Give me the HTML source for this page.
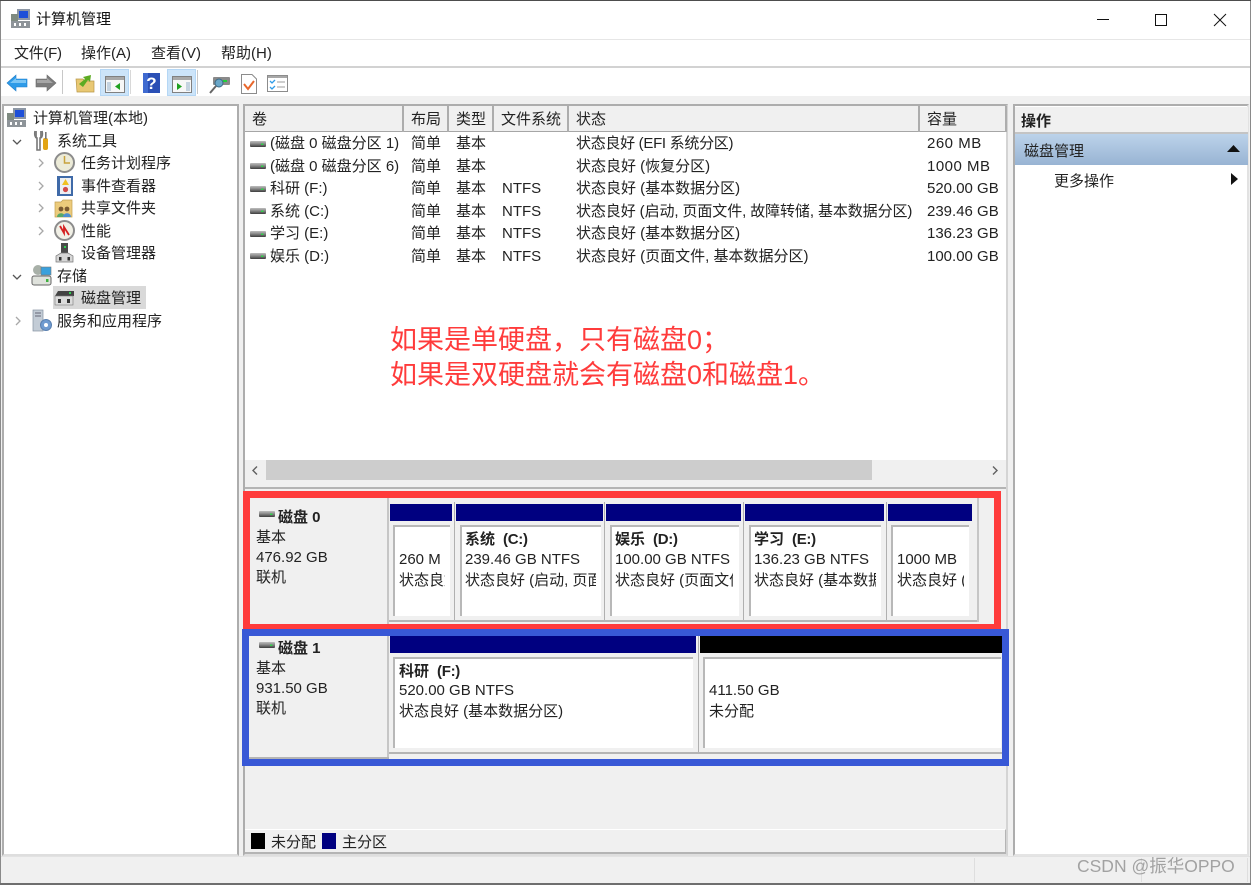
<!DOCTYPE html>
<html><head><meta charset="utf-8"><style>
html,body{margin:0;padding:0;width:1251px;height:885px;overflow:hidden;background:#f0f0f0}
body{position:relative;font-family:"Liberation Sans","Noto Sans CJK SC",sans-serif;font-size:15px;color:#222}
.t{position:absolute;white-space:nowrap;line-height:20px;height:20px}
.b{font-weight:bold}
.b span{margin-left:8px;letter-spacing:-.3px}
.r{position:absolute}
.c{overflow:hidden}
.v{position:absolute;background:#fff;border-top:2px solid #b8b8b8;border-left:2px solid #b8b8b8;box-sizing:border-box}
svg{position:absolute;overflow:visible}
</style></head><body>
<svg width="0" height="0" style="position:absolute"><defs>
<linearGradient id="dg" x1="0" y1="0" x2="0" y2="1"><stop offset="0" stop-color="#bdbdbd"/><stop offset=".45" stop-color="#8a8a8a"/><stop offset="1" stop-color="#3c3c3c"/></linearGradient>
<symbol id="disk" viewBox="0 0 16 8"><rect x="0" y="1" width="16" height="6" rx="1" fill="url(#dg)"/><rect x="11" y="3.5" width="2.5" height="1.5" fill="#2fd04a"/></symbol>
<symbol id="pc" viewBox="0 0 20 20"><rect x="6" y="0" width="13" height="11" fill="#8d97a5"/><rect x="8" y="2" width="9" height="7" fill="#1d4fd8"/><rect x="0" y="5" width="7" height="8" fill="#7e8a80"/><rect x="0" y="12" width="19" height="7" fill="#8e9499"/><rect x="3" y="14" width="2" height="3" fill="#fff"/><rect x="8" y="14" width="2" height="3" fill="#fff"/><rect x="13" y="14" width="2" height="3" fill="#fff"/></symbol>
<symbol id="chD" viewBox="0 0 10 6"><path d="M1 1L5 5L9 1" fill="none" stroke="#555" stroke-width="1.3"/></symbol>
<symbol id="chR" viewBox="0 0 6 10"><path d="M1 1L5 5L1 9" fill="none" stroke="#a8a8a8" stroke-width="1.3"/></symbol>
</defs></svg>

<!-- window frame / title -->
<div class="r" style="left:0;top:0;width:1251px;height:1px;background:#4d4d4d"></div>
<div class="r" style="left:1px;top:1px;width:1249px;height:38px;background:#fff"></div>
<div class="r" style="left:1px;top:39px;width:1249px;height:1px;background:#e6e6e6"></div>
<div class="r" style="left:1px;top:40px;width:1249px;height:26px;background:#fff"></div>
<div class="r" style="left:1px;top:66px;width:1249px;height:2px;background:#d2d2d2"></div>
<div class="r" style="left:1px;top:68px;width:1249px;height:28px;background:#fff"></div>
<div class="r" style="left:0;top:1px;width:1px;height:884px;background:#8a8a8a"></div>
<div class="r" style="left:1250px;top:1px;width:1px;height:884px;background:#8a8a8a"></div>
<svg style="left:11px;top:9px" width="20" height="20"><use href="#pc" width="20" height="20"/></svg>
<div class="t" style="left:36px;top:10px;color:#111">计算机管理</div>
<svg style="left:1097px;top:19px" width="12" height="2"><rect width="12" height="1" fill="#111"/></svg>
<svg style="left:1155px;top:14px" width="12" height="12"><rect x=".5" y=".5" width="11" height="11" fill="none" stroke="#111"/></svg>
<svg style="left:1214px;top:14px" width="12" height="12"><path d="M0 0L12 12M12 0L0 12" stroke="#111" fill="none"/></svg>

<!-- menu -->
<div class="t" style="left:14px;top:44px;letter-spacing:-.3px">文件(F)</div>
<div class="t" style="left:81px;top:44px">操作(A)</div>
<div class="t" style="left:151px;top:44px">查看(V)</div>
<div class="t" style="left:221px;top:44px">帮助(H)</div>

<!-- toolbar -->
<div class="r" style="left:100px;top:69px;width:29px;height:27px;background:#cce4f9;box-sizing:border-box;border:1px solid #b5d7f5"></div>
<div class="r" style="left:167px;top:69px;width:29px;height:27px;background:#cce4f9;box-sizing:border-box;border:1px solid #b5d7f5"></div>
<div class="r" style="left:62px;top:70px;width:1px;height:24px;background:#c8c8c8"></div>
<div class="r" style="left:130px;top:70px;width:1px;height:24px;background:#d8d8d8"></div>
<div class="r" style="left:197px;top:70px;width:1px;height:24px;background:#c8c8c8"></div>
<svg style="left:7px;top:74px" width="20" height="18"><path d="M0 9L9 1V5H20V13H9V17Z" fill="#2e9be8" stroke="#1f7fcc" stroke-width=".6"/><path d="M3 9L9 4V6H19V9Z" fill="#7cc6f5"/></svg>
<svg style="left:36px;top:74px" width="20" height="18"><path d="M20 9L11 1V5H0V13H11V17Z" fill="#7d7d7d" stroke="#6b6b6b" stroke-width=".6"/><path d="M1 6H11V4L17 9H1Z" fill="#a6a6a6"/></svg>
<svg style="left:76px;top:74px" width="19" height="19"><path d="M0 5H7L9 7H18V18H1Z" fill="#e9c873" stroke="#b8974a" stroke-width=".7"/><path d="M3 10L9 5L7 3L15 1L14 8L12 6L7 13Z" fill="#5dab22"/></svg>
<svg style="left:105px;top:76px" width="20" height="17"><rect x=".5" y=".5" width="19" height="16" fill="#f7f7f7" stroke="#808080"/><rect x="1" y="1" width="18" height="3" fill="#a8a8a8"/><rect x="2" y="6" width="4" height="9" fill="#c5d3e0"/><path d="M15 7V14L10 10.5Z" fill="#1fa01f"/></svg>
<svg style="left:143px;top:73px" width="17" height="20"><rect width="17" height="20" fill="#2a4fb5"/><rect x="0" y="0" width="5" height="20" fill="#3f6ad0"/><text x="8.5" y="16" text-anchor="middle" font-family="Liberation Sans" font-weight="bold" font-size="17" fill="#fff">?</text></svg>
<svg style="left:172px;top:76px" width="20" height="17"><rect x=".5" y=".5" width="19" height="16" fill="#f7f7f7" stroke="#808080"/><rect x="1" y="1" width="18" height="3" fill="#a8a8a8"/><rect x="14" y="6" width="4" height="9" fill="#c5d3e0"/><path d="M5 7V14L10 10.5Z" fill="#1fa01f"/></svg>
<svg style="left:210px;top:76px" width="20" height="19"><rect x="3" y="1" width="17" height="8" rx="1" fill="#8a8a8a"/><rect x="13" y="4" width="4" height="2" fill="#1fd03a"/><circle cx="9" cy="7" r="4" fill="#6aa7c8" stroke="#3d6a86"/><path d="M6 10L0 17" stroke="#666" stroke-width="2"/></svg>
<svg style="left:241px;top:74px" width="16" height="20"><path d="M.5.5H11L15.5 5V19.5H.5Z" fill="#fff" stroke="#8c8c8c"/><path d="M3 10L7 15L13 7" fill="none" stroke="#e8672c" stroke-width="2"/></svg>
<svg style="left:267px;top:75px" width="21" height="17"><rect x=".5" y=".5" width="20" height="16" fill="#fff" stroke="#8c8c8c"/><rect x="1" y="1" width="19" height="2" fill="#a8a8a8"/><path d="M3 6L5 8L8 5M3 12L5 14L8 11" fill="none" stroke="#2e9be8" stroke-width="1.3"/><path d="M10 7H18M10 12H18" stroke="#bdbdbd" stroke-width="1.5"/></svg>

<!-- left pane -->
<div class="r" style="left:2px;top:104px;width:237px;height:752px;box-sizing:border-box;background:#fff;border:2px solid #adadad;border-bottom-color:#dedede"></div>
<svg style="left:7px;top:108px" width="20" height="20"><use href="#pc" width="20" height="20"/></svg>
<div class="t" style="left:33px;top:109px">计算机管理(本地)</div>

<svg style="left:12px;top:139px" width="10" height="6"><use href="#chD" width="10" height="6"/></svg>
<svg style="left:33px;top:130px" width="16" height="21"><path d="M3 1V8M8 1V8" stroke="#888" stroke-width="2"/><path d="M2 1C1 6 3 8 4 8V20H7V8C9 8 10 5 9 1" fill="none" stroke="#777" stroke-width="1.6"/><rect x="10" y="8" width="5" height="12" rx="2" fill="#e2a414"/><rect x="12" y="2" width="1.6" height="7" fill="#777"/></svg>
<div class="t" style="left:57px;top:132px">系统工具</div>

<svg style="left:38px;top:158px" width="6" height="10"><use href="#chR" width="6" height="10"/></svg>
<svg style="left:54px;top:152px" width="21" height="21"><circle cx="10.5" cy="10.5" r="9.5" fill="#ecebd8" stroke="#8c8c8c" stroke-width="2"/><path d="M10.5 4V11H16" fill="none" stroke="#c7a23c" stroke-width="1.5"/></svg>
<div class="t" style="left:81px;top:154px">任务计划程序</div>

<svg style="left:38px;top:181px" width="6" height="10"><use href="#chR" width="6" height="10"/></svg>
<svg style="left:56px;top:176px" width="18" height="20"><rect x="1" y="0" width="16" height="20" fill="#3f6aa8"/><rect x="4" y="2" width="11" height="16" fill="#eceef2"/><path d="M9.5 3L13 9H6Z" fill="#f0c020"/><circle cx="9.5" cy="13.5" r="2.6" fill="#d04a4a"/></svg>
<div class="t" style="left:81px;top:177px">事件查看器</div>

<svg style="left:38px;top:203px" width="6" height="10"><use href="#chR" width="6" height="10"/></svg>
<svg style="left:55px;top:199px" width="18" height="19"><path d="M0 3H6L8 1H17V18H0Z" fill="#eccb7c" stroke="#c2a04f" stroke-width=".7"/><circle cx="6" cy="10" r="2.4" fill="#7a5a32"/><circle cx="12" cy="10" r="2.4" fill="#7a5a32"/><path d="M2 18C2 13 10 13 10 18Z" fill="#58a868"/><path d="M8 18C8 13 16 13 16 18Z" fill="#4f8fd0"/></svg>
<div class="t" style="left:81px;top:199px">共享文件夹</div>

<svg style="left:38px;top:226px" width="6" height="10"><use href="#chR" width="6" height="10"/></svg>
<svg style="left:54px;top:220px" width="21" height="21"><circle cx="10.5" cy="10.5" r="9.5" fill="#f1f0e6" stroke="#8c8c8c" stroke-width="2"/><path d="M6 6L10 13L10 7L15 15" fill="none" stroke="#d42020" stroke-width="1.8"/></svg>
<div class="t" style="left:81px;top:222px">性能</div>

<svg style="left:56px;top:243px" width="17" height="20"><rect x="5" y="0" width="7" height="11" fill="#4a4a4a"/><rect x="8" y="3" width="2" height="2" fill="#30d050"/><path d="M0 19V13L5 10H12L17 13V19Z" fill="#d6d6d6" stroke="#777" stroke-width=".7"/><rect x="3" y="14" width="2.5" height="3.5" fill="#333"/><rect x="11.5" y="14" width="2.5" height="3.5" fill="#333"/></svg>
<div class="t" style="left:81px;top:244px">设备管理器</div>

<svg style="left:12px;top:274px" width="10" height="6"><use href="#chD" width="10" height="6"/></svg>
<svg style="left:31px;top:265px" width="21" height="21"><circle cx="7" cy="5" r="5" fill="#a8b0a8"/><rect x="10" y="2" width="10" height="8" fill="#3aa0dc" stroke="#777" stroke-width=".6"/><rect x="1" y="11" width="19" height="9" rx="2" fill="#dfe2dc" stroke="#666"/><rect x="15" y="14" width="2.5" height="3" fill="#40b040"/></svg>
<div class="t" style="left:57px;top:267px">存储</div>

<div class="r" style="left:53px;top:286px;width:93px;height:23px;background:#d9d9d9"></div>
<svg style="left:55px;top:290px" width="19" height="16"><path d="M0 6L3 1H19V6Z" fill="#444"/><rect x="14" y="2" width="2" height="2" fill="#30d050"/><rect x="0" y="6" width="18" height="9" fill="#dcdcdc" stroke="#777" stroke-width=".6"/><rect x="3" y="9" width="3" height="4" fill="#333"/><rect x="12" y="9" width="3" height="4" fill="#333"/></svg>
<div class="t" style="left:81px;top:289px">磁盘管理</div>

<svg style="left:15px;top:316px" width="6" height="10"><use href="#chR" width="6" height="10"/></svg>
<svg style="left:33px;top:310px" width="19" height="22"><rect x="0" y="0" width="10" height="21" fill="#c3ccd6" stroke="#8592a0" stroke-width=".7"/><path d="M2 3H8M2 6H8" stroke="#667" stroke-width="1"/><circle cx="13" cy="15" r="5.5" fill="#6f9bd0" stroke="#5a80b0"/><circle cx="13" cy="15" r="2" fill="#fff"/></svg>
<div class="t" style="left:57px;top:312px">服务和应用程序</div>

<!-- middle pane -->
<div class="r" style="left:243px;top:104px;width:765px;height:752px;box-sizing:border-box;background:#f0f0f0;border:2px solid #adadad;border-right-color:#d4d4d4;border-bottom-color:#dedede"></div>
<div class="r" style="left:245px;top:106px;width:761px;height:374px;background:#fff"></div>
<!-- col header -->
<div class="r" style="left:245px;top:106px;width:761px;height:26px;background:#f0f0f0;border-bottom:1px solid #a6a6a6;box-sizing:border-box"></div>
<div class="r" style="left:402px;top:106px;width:2px;height:26px;background:#adadad"></div>
<div class="r" style="left:447px;top:106px;width:2px;height:26px;background:#adadad"></div>
<div class="r" style="left:492px;top:106px;width:2px;height:26px;background:#adadad"></div>
<div class="r" style="left:567px;top:106px;width:2px;height:26px;background:#adadad"></div>
<div class="r" style="left:918px;top:106px;width:2px;height:26px;background:#adadad"></div>
<div class="r" style="left:1005px;top:106px;width:2px;height:26px;background:#adadad"></div>
<div class="t" style="left:252px;top:110px">卷</div>
<div class="t" style="left:411px;top:110px">布局</div>
<div class="t" style="left:456px;top:110px">类型</div>
<div class="t" style="left:501px;top:110px">文件系统</div>
<div class="t" style="left:576px;top:110px">状态</div>
<div class="t" style="left:927px;top:110px">容量</div>

<!-- rows -->
<svg style="left:250px;top:140px" width="16" height="8"><use href="#disk" width="16" height="8"/></svg>
<div class="t" style="left:270px;top:134px">(磁盘 0 磁盘分区 1)</div><div class="t" style="left:411px;top:134px">简单</div><div class="t" style="left:456px;top:134px">基本</div><div class="t" style="left:576px;top:134px;letter-spacing:-.3px">状态良好 (EFI 系统分区)</div><div class="t" style="left:927px;top:134px;letter-spacing:.5px">260 MB</div>

<svg style="left:250px;top:162px" width="16" height="8"><use href="#disk" width="16" height="8"/></svg>
<div class="t" style="left:270px;top:157px">(磁盘 0 磁盘分区 6)</div><div class="t" style="left:411px;top:157px">简单</div><div class="t" style="left:456px;top:157px">基本</div><div class="t" style="left:576px;top:157px">状态良好 (恢复分区)</div><div class="t" style="left:927px;top:157px;letter-spacing:.5px">1000 MB</div>

<svg style="left:250px;top:185px" width="16" height="8"><use href="#disk" width="16" height="8"/></svg>
<div class="t" style="left:270px;top:179px">科研 (F:)</div><div class="t" style="left:411px;top:179px">简单</div><div class="t" style="left:456px;top:179px">基本</div><div class="t" style="left:502px;top:179px">NTFS</div><div class="t" style="left:576px;top:179px">状态良好 (基本数据分区)</div><div class="t" style="left:927px;top:179px">520.00 GB</div>

<svg style="left:250px;top:207px" width="16" height="8"><use href="#disk" width="16" height="8"/></svg>
<div class="t" style="left:270px;top:202px">系统 (C:)</div><div class="t" style="left:411px;top:202px">简单</div><div class="t" style="left:456px;top:202px">基本</div><div class="t" style="left:502px;top:202px">NTFS</div><div class="t" style="left:576px;top:202px;letter-spacing:-.1px">状态良好 (启动, 页面文件, 故障转储, 基本数据分区)</div><div class="t" style="left:927px;top:202px">239.46 GB</div>

<svg style="left:250px;top:230px" width="16" height="8"><use href="#disk" width="16" height="8"/></svg>
<div class="t" style="left:270px;top:224px">学习 (E:)</div><div class="t" style="left:411px;top:224px">简单</div><div class="t" style="left:456px;top:224px">基本</div><div class="t" style="left:502px;top:224px">NTFS</div><div class="t" style="left:576px;top:224px">状态良好 (基本数据分区)</div><div class="t" style="left:927px;top:224px">136.23 GB</div>

<svg style="left:250px;top:252px" width="16" height="8"><use href="#disk" width="16" height="8"/></svg>
<div class="t" style="left:270px;top:247px">娱乐 (D:)</div><div class="t" style="left:411px;top:247px">简单</div><div class="t" style="left:456px;top:247px">基本</div><div class="t" style="left:502px;top:247px">NTFS</div><div class="t" style="left:576px;top:247px">状态良好 (页面文件, 基本数据分区)</div><div class="t" style="left:927px;top:247px">100.00 GB</div>

<!-- annotation -->
<div class="t" style="left:390px;top:323px;height:34px;line-height:34px;font-size:27px;color:#ff3b3b">如果是单硬盘，只有磁盘0；</div>
<div class="t" style="left:390px;top:358px;height:34px;line-height:34px;font-size:27px;color:#ff3b3b">如果是双硬盘就会有磁盘0和磁盘1。</div>

<!-- scrollbar -->
<div class="r" style="left:245px;top:460px;width:761px;height:20px;background:#f0f0f0"></div>
<div class="r" style="left:266px;top:460px;width:606px;height:20px;background:#cdcdcd"></div>
<svg style="left:252px;top:466px" width="6" height="9"><path d="M5 .5L1 4.5L5 8.5" fill="none" stroke="#606060" stroke-width="1.4"/></svg>
<svg style="left:992px;top:466px" width="6" height="9"><path d="M1 .5L5 4.5L1 8.5" fill="none" stroke="#606060" stroke-width="1.4"/></svg>

<!-- disk area bg -->
<div class="r" style="left:245px;top:480px;width:761px;height:349px;background:#f0f0f0"></div>
<div class="r" style="left:245px;top:487px;width:761px;height:2px;background:#b4b4b4"></div>

<!-- Disk 0 -->
<div class="r" style="left:387px;top:498px;width:2px;height:128px;background:#c6c6c6"></div>
<div class="r" style="left:389px;top:620px;width:589px;height:2px;background:#b4b4b4"></div>
<div class="r" style="left:977px;top:498px;width:2px;height:124px;background:#c6c6c6"></div>
<div class="r" style="left:390px;top:504px;width:62px;height:17px;background:#000080"></div>
<div class="r" style="left:456px;top:504px;width:147px;height:17px;background:#000080"></div>
<div class="r" style="left:606px;top:504px;width:135px;height:17px;background:#000080"></div>
<div class="r" style="left:745px;top:504px;width:139px;height:17px;background:#000080"></div>
<div class="r" style="left:888px;top:504px;width:84px;height:17px;background:#000080"></div>
<div class="r" style="left:454px;top:502px;width:1px;height:118px;background:#b0b0b0"></div>
<div class="r" style="left:604px;top:502px;width:1px;height:118px;background:#b0b0b0"></div>
<div class="r" style="left:743px;top:502px;width:1px;height:118px;background:#b0b0b0"></div>
<div class="r" style="left:886px;top:502px;width:1px;height:118px;background:#b0b0b0"></div>
<div class="v" style="left:393px;top:525px;width:57px;height:91px"></div>
<div class="v" style="left:460px;top:525px;width:141px;height:91px"></div>
<div class="v" style="left:610px;top:525px;width:129px;height:91px"></div>
<div class="v" style="left:749px;top:525px;width:132px;height:91px"></div>
<div class="v" style="left:891px;top:525px;width:78px;height:91px"></div>

<svg style="left:259px;top:510px" width="16" height="8"><use href="#disk" width="16" height="8"/></svg>
<div class="t b" style="left:278px;top:508px">磁盘 0</div>
<div class="t" style="left:256px;top:528px">基本</div>
<div class="t" style="left:256px;top:548px">476.92 GB</div>
<div class="t" style="left:256px;top:568px">联机</div>

<div class="t c" style="left:399px;top:550px;width:42px">260 MB NTFS</div>
<div class="t c" style="left:399px;top:571px;width:46px">状态良好 (</div>
<div class="t b" style="left:465px;top:530px">系统<span>(C:)</span></div>
<div class="t" style="left:465px;top:550px">239.46 GB NTFS</div>
<div class="t c" style="left:465px;top:571px;width:131px">状态良好 (启动, 页面文件</div>
<div class="t b" style="left:615px;top:530px">娱乐<span>(D:)</span></div>
<div class="t" style="left:615px;top:550px">100.00 GB NTFS</div>
<div class="t c" style="left:615px;top:571px;width:118px">状态良好 (页面文件</div>
<div class="t b" style="left:754px;top:530px">学习<span>(E:)</span></div>
<div class="t" style="left:754px;top:550px">136.23 GB NTFS</div>
<div class="t c" style="left:754px;top:571px;width:122px">状态良好 (基本数据分区</div>
<div class="t" style="left:897px;top:550px">1000 MB</div>
<div class="t c" style="left:897px;top:571px;width:67px">状态良好 (恢复</div>

<!-- Disk 1 -->
<div class="r" style="left:387px;top:636px;width:2px;height:122px;background:#c6c6c6"></div>
<div class="r" style="left:249px;top:757px;width:140px;height:2px;background:#b4b4b4"></div>
<div class="r" style="left:389px;top:752px;width:613px;height:2px;background:#b4b4b4"></div>
<div class="r" style="left:390px;top:636px;width:306px;height:17px;background:#000080"></div>
<div class="r" style="left:700px;top:636px;width:302px;height:17px;background:#000"></div>
<div class="r" style="left:698px;top:634px;width:1px;height:118px;background:#b0b0b0"></div>
<div class="v" style="left:393px;top:657px;width:300px;height:91px"></div>
<div class="v" style="left:703px;top:657px;width:298px;height:91px"></div>

<svg style="left:259px;top:641px" width="16" height="8"><use href="#disk" width="16" height="8"/></svg>
<div class="t b" style="left:278px;top:639px">磁盘 1</div>
<div class="t" style="left:256px;top:659px">基本</div>
<div class="t" style="left:256px;top:679px">931.50 GB</div>
<div class="t" style="left:256px;top:699px">联机</div>
<div class="t b" style="left:399px;top:662px">科研<span>(F:)</span></div>
<div class="t" style="left:399px;top:681px">520.00 GB NTFS</div>
<div class="t" style="left:399px;top:702px">状态良好 (基本数据分区)</div>
<div class="t" style="left:709px;top:681px">411.50 GB</div>
<div class="t" style="left:709px;top:702px">未分配</div>

<!-- frames -->
<div class="r" style="left:243px;top:491px;width:758px;height:140px;box-sizing:border-box;border:7px solid #ff3b3b"></div>
<div class="r" style="left:242px;top:629px;width:767px;height:137px;box-sizing:border-box;border:7px solid #3858d6"></div>

<!-- legend -->
<div class="r" style="left:245px;top:829px;width:761px;height:25px;box-sizing:border-box;background:#f0f0f0;border-top:1px solid #fff;border-bottom:2px solid #b4b4b4;border-right:1px solid #b4b4b4"></div>
<div class="r" style="left:251px;top:833px;width:14px;height:16px;background:#000"></div>
<div class="t" style="left:271px;top:833px">未分配</div>
<div class="r" style="left:322px;top:833px;width:14px;height:16px;background:#000080"></div>
<div class="t" style="left:342px;top:833px">主分区</div>

<!-- right pane -->
<div class="r" style="left:1013px;top:104px;width:236px;height:752px;box-sizing:border-box;background:#fff;border:2px solid #adadad;border-right-color:#e2e2e2;border-bottom-color:#e4e4e4"></div>
<div class="r" style="left:1015px;top:107px;width:233px;height:25px;background:#f0f0f0;border-bottom:2px solid #c4c4c4"></div>
<div class="t b" style="left:1021px;top:112px">操作</div>
<div class="r" style="left:1015px;top:134px;width:233px;height:31px;background:linear-gradient(#bcd3ea,#98b4d3)"></div>
<div class="t" style="left:1024px;top:142px;color:#222">磁盘管理</div>
<svg style="left:1227px;top:145px" width="13" height="7"><path d="M0 7L6.5 0L13 7Z" fill="#111"/></svg>
<div class="t" style="left:1054px;top:172px">更多操作</div>
<svg style="left:1231px;top:173px" width="7" height="12"><path d="M0 0L7 6L0 12Z" fill="#111"/></svg>

<!-- status bar -->
<div class="r" style="left:1px;top:856px;width:1249px;height:27px;background:#f0f0f0;border-top:1px solid #e2e2e2;box-sizing:border-box"></div>
<div class="r" style="left:974px;top:858px;width:1px;height:24px;background:#dedede"></div>
<div class="r" style="left:1141px;top:858px;width:1px;height:24px;background:#dedede"></div>
<div class="r" style="left:1247px;top:858px;width:1px;height:24px;background:#dedede"></div>
<div class="r" style="left:0;top:883px;width:1251px;height:2px;background:#6e6e6e"></div>
<div class="t" style="left:1077px;top:856px;font-size:17.5px;color:#a2a2a2">CSDN @振华OPPO</div>
</body></html>
